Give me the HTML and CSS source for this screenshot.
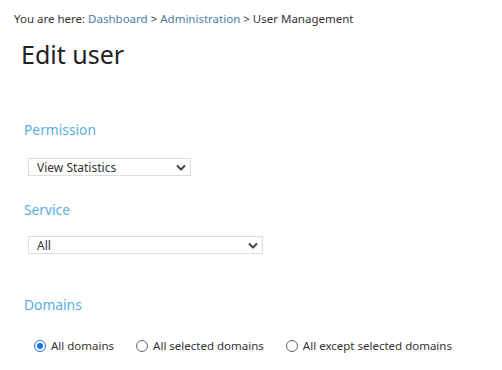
FILE: index.html
```html
<!DOCTYPE html>
<html>
<head>
<meta charset="utf-8">
<link rel="stylesheet" href="styles.css">
</head>
<body>
<div class="page">
  <div class="crumbs">You are here: <a href="#">Dashboard</a> &gt; <a href="#">Administration</a> &gt; User Management</div>
  <h1 class="title">Edit user</h1>
  <section class="field first">
    <h2 class="label">Permission</h2>
    <div class="select short"><span>View Statistics</span><svg width="10" height="7" viewBox="0 0 10 7"><path d="M1 1.5 L5 5.5 L9 1.5" fill="none" stroke="#444" stroke-width="2"/></svg></div>
  </section>
  <section class="field">
    <h2 class="label">Service</h2>
    <div class="select long"><span>All</span><svg width="10" height="7" viewBox="0 0 10 7"><path d="M1 1.5 L5 5.5 L9 1.5" fill="none" stroke="#444" stroke-width="2"/></svg></div>
  </section>
  <section class="field domains">
    <h2 class="label">Domains</h2>
    <div class="radios">
      <label class="radio"><span class="dot on"></span>All domains</label>
      <label class="radio"><span class="dot"></span>All selected domains</label>
      <label class="radio"><span class="dot"></span>All except selected domains</label>
    </div>
  </section>
</div>
</body>
</html>
```
FILE: styles.css
```css
html, body { margin: 0; padding: 0; background: #fff; }
body { font-family: "Noto Sans", "Open Sans", sans-serif; color: #333; }
.page { padding: 11px 0 0 14px; }
.crumbs { font-size: 11.5px; line-height: 16px; color: #333; }
.crumbs a { color: #4a7ca6; text-decoration: none; }
.title { margin: 11px 0 0 7px; font-size: 25px; font-weight: 400; line-height: 32px; color: #222; }
.field { margin: 0 0 0 10px; }
.field.first { margin-top: 50px; }
.field + .field { margin-top: 24px; }
.field.domains { margin-top: 41px; }
.label { margin: 0; font-size: 13.8px; font-weight: 400; line-height: 20px; color: #5aaee0; }
.select { margin: 18px 0 0 4px; height: 16px; border: 1px solid #ddd; display: flex; align-items: center; justify-content: space-between; padding: 0 4px 0 8px; font-size: 12px; color: #333; }
.select.short { width: 149px; }
.select.long { width: 221px; margin-top: 16px; }
.radios { display: flex; gap: 22px; margin: 23px 0 0 10px; }
.radio { display: flex; align-items: center; gap: 5px; font-size: 11.5px; color: #333; }
.dot { width: 10px; height: 10px; border: 1px solid #666; border-radius: 50%; box-sizing: content-box; display: inline-block; position: relative; }
.dot.on { border-color: #1a73e8; }
.dot.on::after { content: ""; position: absolute; left: 2px; top: 2px; width: 6px; height: 6px; border-radius: 50%; background: #1a73e8; }
```
